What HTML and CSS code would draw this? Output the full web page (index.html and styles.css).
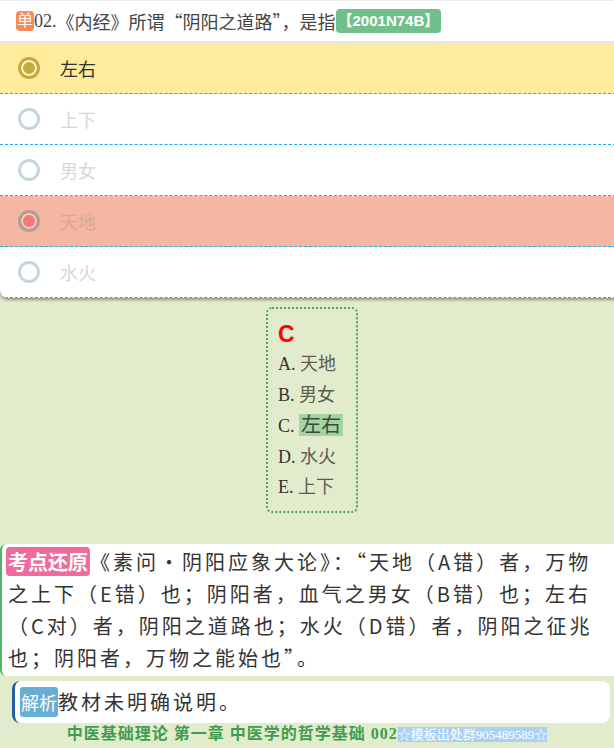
FILE: index.html
```html
<!DOCTYPE html>
<html lang="zh-CN">
<head>
    <meta charset="UTF-8">
    <meta name="viewport" content="width=device-width, initial-scale=1.0">
    <title>中医基础理论 单选题</title>
    <link rel="stylesheet" href="styles.css">
</head>
<body>
    <div class="card">
        <div class="question">
            <span class="type">单</span>
            <span class="q-num">02.</span><span class="q-text">《内经》所谓“阴阳之道路”，是指</span>
            <span class="tag">【2001N74B】</span>
        </div>
        <ul class="options">
            <li class="opt picked"><span class="radio"></span><span class="opt-text">左右</span></li>
            <li class="opt"><span class="radio"></span><span class="opt-text">上下</span></li>
            <li class="opt"><span class="radio"></span><span class="opt-text">男女</span></li>
            <li class="opt wrong"><span class="radio"></span><span class="opt-text">天地</span></li>
            <li class="opt"><span class="radio"></span><span class="opt-text">水火</span></li>
        </ul>
    </div>

    <div class="answer-wrap">
        <div class="answer">
            <div class="answer-key">C</div>
            <div class="answer-line"><b>A.</b> 天地</div>
            <div class="answer-line"><b>B.</b> 男女</div>
            <div class="answer-line"><b>C.</b> <span class="hit">左右</span></div>
            <div class="answer-line"><b>D.</b> 水火</div>
            <div class="answer-line"><b>E.</b> 上下</div>
        </div>
    </div>

    <div class="point">
        <span class="point-badge">考点还原</span>《素问·阴阳应象大论》：“天地（A错）者，万物<br>之上下（E错）也；阴阳者，血气之男女（B错）也；左右<br>（C对）者，阴阳之道路也；水火（D错）者，阴阳之征兆<br>也；阴阳者，万物之能始也”。
    </div>

    <div class="analysis">
        <span class="analysis-badge">解析</span>教材未明确说明。
    </div>

    <div class="footer">中医基础理论 第一章 中医学的哲学基础 002<span class="source">☆模板出处群905489589☆</span></div>
</body>
</html>
```

FILE: styles.css
```css
body {
    margin: 0;
    background-color: #e2ebcc;
    font-family: "Liberation Serif", "Noto Sans CJK SC", serif;
    color: #333;
    overflow-x: hidden;
}

.card {
    width: calc(100% + 12px);
    background: #fff;
    border-radius: 0 0 8px 8px;
    box-shadow: 0 2px 3px rgba(0, 0, 0, 0.35);
    overflow: hidden;
}

.question {
    display: flex;
    align-items: center;
    height: 40px;
    padding-left: 16px;
    border-top: 1px solid #ececec;
    border-bottom: 2px solid #e3e6ea;
    font-size: 18px;
    color: #444;
}

.q-text {
    font-family: "Noto Sans CJK SC", sans-serif;
}

.type {
    background: #f58b58;
    color: #fff;
    font-size: 16px;
    line-height: 20px;
    padding: 0 1px;
    border-radius: 4px;
}

.tag {
    margin-left: 0;
    background: #71bf8b;
    color: #fff;
    font-family: "Liberation Sans", "Noto Sans CJK SC", sans-serif;
    font-weight: bold;
    font-size: 15px;
    line-height: 24px;
    padding: 0 2px;
    border-radius: 4px;
}

.options {
    list-style: none;
    margin: 0;
    padding: 0;
}

.opt {
    display: flex;
    align-items: center;
    gap: 20px;
    height: 50px;
    padding-left: 18px;
    border-bottom: 1px dashed #19aef0;
    font-size: 18px;
    color: #d6d8de;
}

.radio {
    width: 16px;
    height: 16px;
    border: 3px solid #c5d5dd;
    border-radius: 50%;
    background: #fff;
}

.opt.picked {
    background: #feeb9b;
    color: #333;
}

.opt.picked .radio {
    border-color: #c2aa3e;
    background: #c2aa3e;
    box-shadow: inset 0 0 0 2px #fff6d0;
}

.opt.wrong {
    background: #f4b8a2;
    color: #dba593;
}

.opt.wrong .radio {
    border-color: #b39d98;
    background: #f47878;
    box-shadow: inset 0 0 0 2px #f6cbbd;
}

.answer-wrap {
    display: flex;
    justify-content: center;
    padding-left: 10px;
    margin-top: 9px;
}

.answer {
    width: 70px;
    padding: 10px 8px 8px 10px;
    border: 2px dotted #4aa860;
    border-radius: 6px;
    font-size: 18px;
    line-height: 30.5px;
    color: #5c5c4c;
}

.answer-key {
    color: #f00;
    font-family: "Liberation Sans", sans-serif;
    font-weight: bold;
    font-size: 23px;
    line-height: 30px;
}

.answer-line b {
    font-weight: normal;
    color: #333;
}

.hit {
    background: #a6d3a4;
    font-size: 20px;
    padding: 0 2px;
    color: #3c4a3c;
}

.point {
    margin-top: 31px;
    width: calc(100% + 40px);
    padding: 2px 0 2px 6px;
    background: #fff;
    border-left: 2px solid #55b06a;
    border-radius: 6px 0 0 6px;
    font-family: "Noto Sans CJK SC", sans-serif;
    font-size: 20px;
    letter-spacing: 3px;
    line-height: 32px;
    white-space: nowrap;
    color: #333;
}

.point-badge {
    background: #ee6b9c;
    color: #fff;
    font-weight: bold;
    letter-spacing: 0;
    padding: 0 2px;
    border-radius: 4px;
    margin-left: -2px;
}

.analysis {
    margin: 5px 4px 0 12px;
    padding: 4px 8px 4px 5px;
    background: #fff;
    border-left: 3px solid #1e5fa8;
    border-radius: 8px;
    font-family: "Noto Sans CJK SC", sans-serif;
    font-size: 20px;
    letter-spacing: 3px;
    line-height: 33px;
}

.analysis-badge {
    background: #6aaed2;
    color: #fff;
    font-size: 18px;
    letter-spacing: 0;
    padding: 2px 1px;
    border-radius: 3px;
}

.footer {
    margin-top: 1px;
    text-align: center;
    font-weight: bold;
    font-size: 16px;
    letter-spacing: 1px;
    line-height: 20px;
    color: #3e9e50;
}

.source {
    background: #a9d1f5;
    color: #fff;
    font-weight: normal;
    font-size: 13px;
    letter-spacing: 0;
}
```
